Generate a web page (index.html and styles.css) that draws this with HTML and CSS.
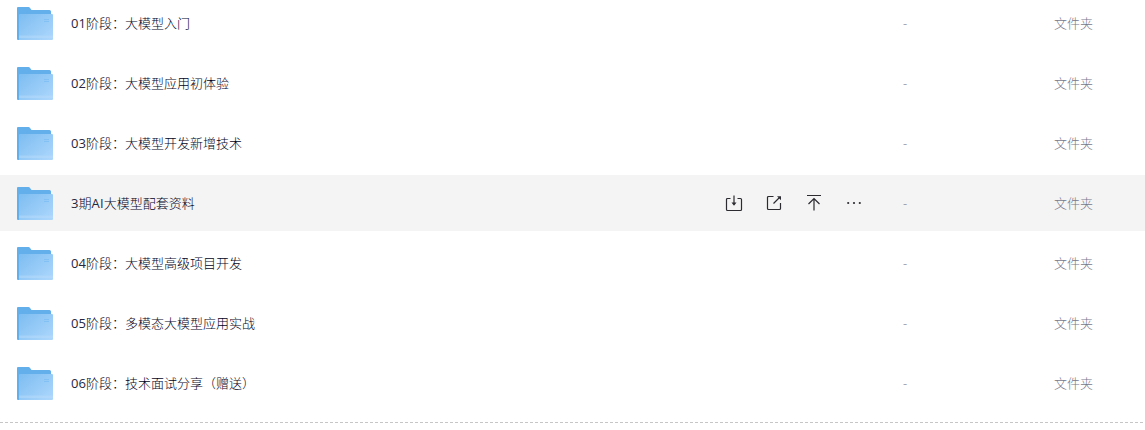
FILE: index.html
```html
<!DOCTYPE html>
<html lang="zh-CN">

<head>
    <meta charset="UTF-8">
    <meta name="viewport" content="width=device-width, initial-scale=1.0">
    <title>文件列表</title>
    <link rel="stylesheet" href="styles.css">
</head>

<body>
    <!-- Shared folder icon -->
    <svg class="sprite" aria-hidden="true">
        <defs>
            <linearGradient id="folderFront" x1="0" y1="0" x2="1" y2="0.9">
                <stop offset="0" stop-color="#7dbdf1"/>
                <stop offset="1" stop-color="#abd6fc"/>
            </linearGradient>
        </defs>
        <symbol id="folder" viewBox="0 0 36 33">
            <path d="M0 1a1 1 0 0 1 1-1h10.500a2 2 0 0 1 1.400.7L14.500 3h18a1.500 1.500 0 0 1 1.500 1.500V33H1a1 1 0 0 1-1-1z" fill="#62afec"/>
            <path d="M2 8a1 1 0 0 1 1-1h32a1 1 0 0 1 1 1v24a1 1 0 0 1-1 1H2z" fill="url(#folderFront)"/>
            <path d="M2 28.500h34V31H2z" fill="#b9dcfb" opacity="0.5"/>
            <path d="M27 12.500h5M27 14.500h5" stroke="#7dbcf2" stroke-width="0.8"/>
        </symbol>
    </svg>

    <ul class="file-list">
        <li class="file-row">
            <svg class="folder"><use href="#folder"/></svg>
            <span class="name"><span class="num">01</span>阶段：大模型入门</span>
            <span class="size">-</span>
            <span class="type">文件夹</span>
        </li>
        <li class="file-row">
            <svg class="folder"><use href="#folder"/></svg>
            <span class="name"><span class="num">02</span>阶段：大模型应用初体验</span>
            <span class="size">-</span>
            <span class="type">文件夹</span>
        </li>
        <li class="file-row">
            <svg class="folder"><use href="#folder"/></svg>
            <span class="name"><span class="num">03</span>阶段：大模型开发新增技术</span>
            <span class="size">-</span>
            <span class="type">文件夹</span>
        </li>
        <li class="file-row active">
            <svg class="folder"><use href="#folder"/></svg>
            <span class="name"><span class="num">3</span>期<span class="num">AI</span>大模型配套资料</span>
            <div class="actions">
                <!-- download -->
                <svg viewBox="0 0 18 18"><path d="M5.500 4.500H2.500a1 1 0 0 0-1 1v10a1 1 0 0 0 1 1h13a1 1 0 0 0 1-1v-10a1 1 0 0 0-1-1h-3M9 1.500v9"/><path class="tip" d="M6.500 8.500h5L9 11.800z"/></svg>
                <!-- share -->
                <svg viewBox="0 0 18 18"><path d="M8.500 2.500h-5a1 1 0 0 0-1 1v11a1 1 0 0 0 1 1h11a1 1 0 0 0 1-1V9M8.500 9.500l6-6"/><path class="tip" d="M12 2.200h4v4z"/></svg>
                <!-- move to top -->
                <svg viewBox="0 0 18 18"><path d="M2 1.500h14M9 16.500V4.500M3.500 10L9 4.500l5.500 5.500"/></svg>
                <!-- more -->
                <svg class="dots" viewBox="0 0 18 18"><circle cx="3.200" cy="9" r="1.100"/><circle cx="9" cy="9" r="1.100"/><circle cx="14.800" cy="9" r="1.100"/></svg>
            </div>
            <span class="size">-</span>
            <span class="type">文件夹</span>
        </li>
        <li class="file-row">
            <svg class="folder"><use href="#folder"/></svg>
            <span class="name"><span class="num">04</span>阶段：大模型高级项目开发</span>
            <span class="size">-</span>
            <span class="type">文件夹</span>
        </li>
        <li class="file-row">
            <svg class="folder"><use href="#folder"/></svg>
            <span class="name"><span class="num">05</span>阶段：多模态大模型应用实战</span>
            <span class="size">-</span>
            <span class="type">文件夹</span>
        </li>
        <li class="file-row">
            <svg class="folder"><use href="#folder"/></svg>
            <span class="name"><span class="num">06</span>阶段：技术面试分享（赠送）</span>
            <span class="size">-</span>
            <span class="type">文件夹</span>
        </li>
    </ul>
    <div class="divider"></div>
</body>

</html>
```
FILE: styles.css
```css
* {
    margin: 0;
    padding: 0;
    box-sizing: border-box;
}

body {
    background-color: #fff;
    color: #03081a;
    font-family: 'Open Sans', 'Noto Sans CJK SC', sans-serif;
    font-size: 13px;
    font-weight: 300;
    height: 100vh;
    overflow: hidden;
}

.sprite {
    display: block;
    width: 0;
    height: 0;
}

.file-list {
    list-style: none;
    display: flex;
    flex-direction: column;
    gap: 4px;
    margin-top: -5px;
}

.file-row {
    display: flex;
    align-items: center;
    height: 56px;
    padding-left: 17px;
}

.file-row.active {
    background-color: #f4f4f4;
}

.folder {
    width: 36px;
    height: 33px;
    margin-right: 18px;
    margin-top: 1px;
}

.name {
    flex: 1;
    color: #03031c;
    line-height: 20px;
}

.num {
    font-weight: 400;
    color: #26273f;
    letter-spacing: 0.1px;
}

.actions {
    display: flex;
    gap: 22px;
    margin-right: 40px;
}

.actions svg {
    width: 18px;
    height: 18px;
    fill: none;
    stroke: #2b2b30;
    stroke-width: 1.2;
}

.actions .tip,
.actions .dots {
    fill: #2b2b30;
    stroke: none;
}

.size,
.type {
    color: #77788c;
    line-height: 20px;
}

.size {
    width: 151px;
}

.type {
    width: 91px;
}

.divider {
    height: 1px;
    margin-top: 11px;
    background: repeating-linear-gradient(90deg, #c6c6c6 0 3px, transparent 3px 5px);
}
```
